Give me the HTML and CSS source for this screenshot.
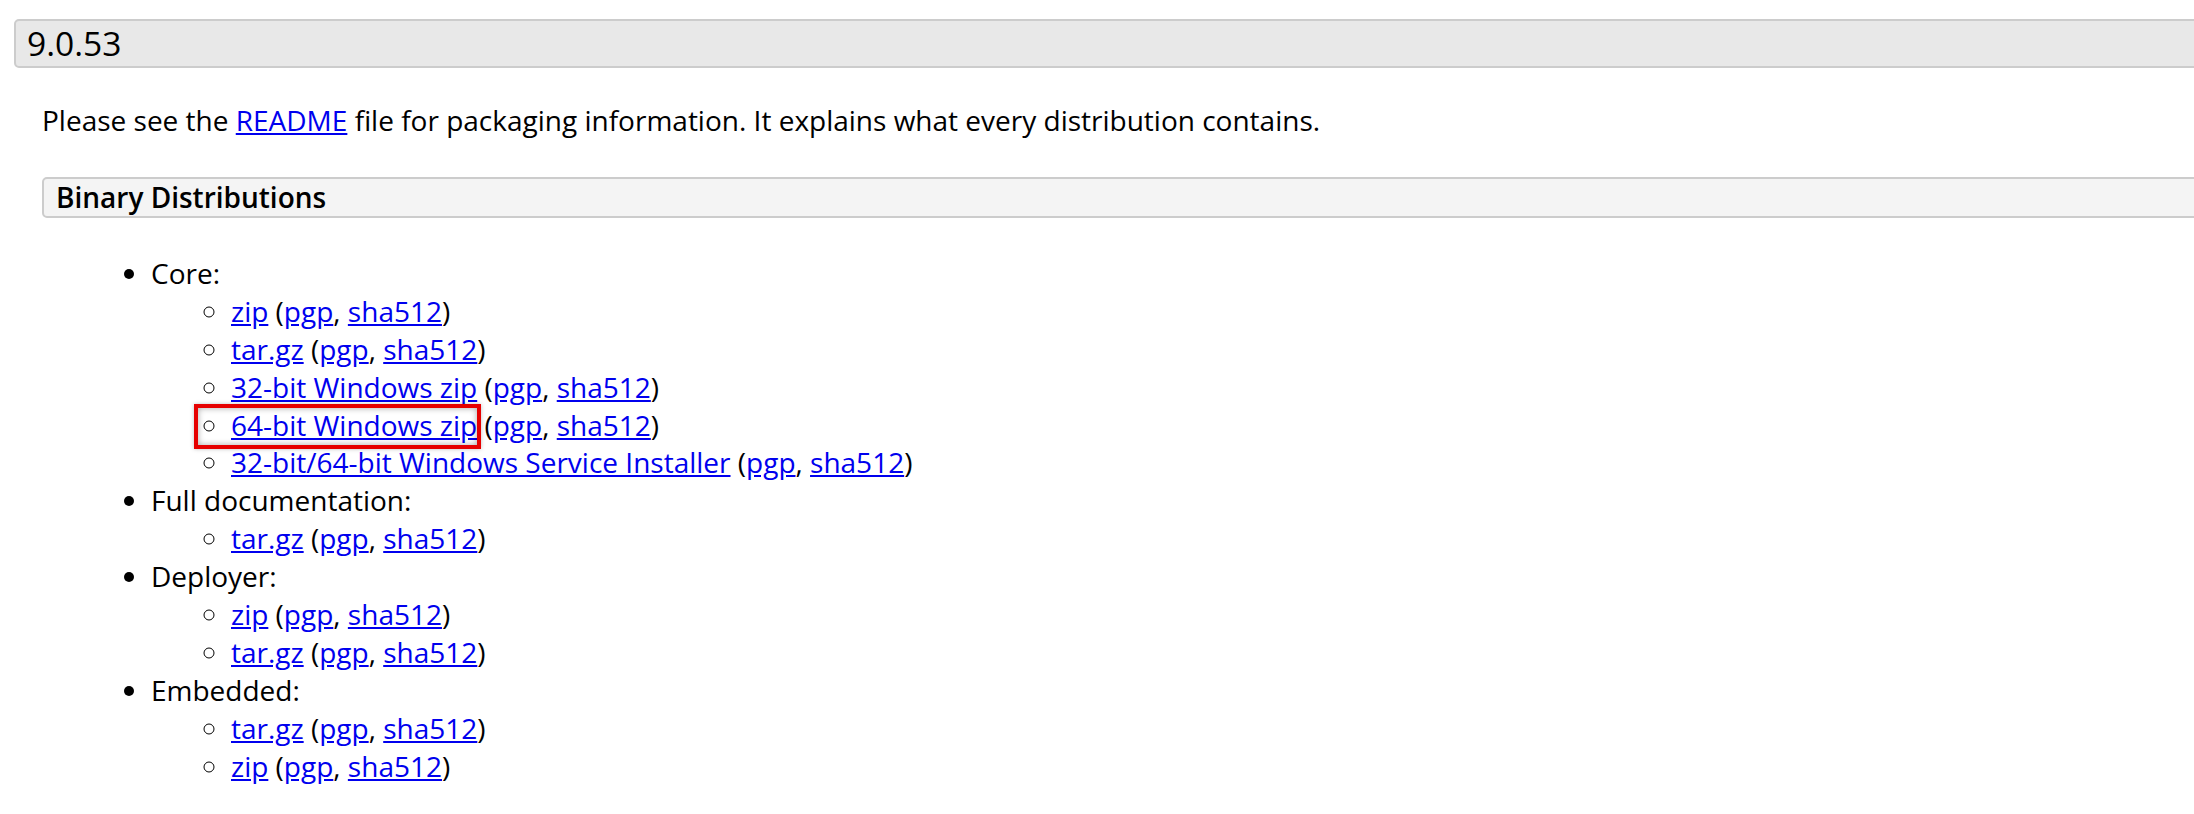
FILE: index.html
```html
<!DOCTYPE html>
<html lang="en">
<head>
<meta charset="utf-8">
<title>Tomcat 9.0.53</title>
<link rel="stylesheet" href="styles.css">
</head>
<body>
<div class="page">
  <h3 class="version-heading">9.0.53</h3>
  <div class="section">
    <p class="intro">Please see the <a href="#">README</a> file for packaging information. It explains what every distribution contains.</p>
    <h4 class="sub-heading">Binary Distributions</h4>
    <ul class="dist-list">
      <li>Core:
        <ul class="file-list">
          <li><a href="#">zip</a> (<a href="#">pgp</a>, <a href="#">sha512</a>)</li>
          <li><a href="#">tar.gz</a> (<a href="#">pgp</a>, <a href="#">sha512</a>)</li>
          <li><a href="#">32-bit Windows zip</a> (<a href="#">pgp</a>, <a href="#">sha512</a>)</li>
          <li class="marked"><span class="highlight"></span><a href="#">64-bit Windows zip</a> (<a href="#">pgp</a>, <a href="#">sha512</a>)</li>
          <li><a href="#">32-bit/64-bit Windows Service Installer</a> (<a href="#">pgp</a>, <a href="#">sha512</a>)</li>
        </ul>
      </li>
      <li>Full documentation:
        <ul class="file-list">
          <li><a href="#">tar.gz</a> (<a href="#">pgp</a>, <a href="#">sha512</a>)</li>
        </ul>
      </li>
      <li>Deployer:
        <ul class="file-list">
          <li><a href="#">zip</a> (<a href="#">pgp</a>, <a href="#">sha512</a>)</li>
          <li><a href="#">tar.gz</a> (<a href="#">pgp</a>, <a href="#">sha512</a>)</li>
        </ul>
      </li>
      <li>Embedded:
        <ul class="file-list">
          <li><a href="#">tar.gz</a> (<a href="#">pgp</a>, <a href="#">sha512</a>)</li>
          <li><a href="#">zip</a> (<a href="#">pgp</a>, <a href="#">sha512</a>)</li>
        </ul>
      </li>
    </ul>
  </div>
</div>
</body>
</html>
```
FILE: styles.css
```css
html, body {
  margin: 0;
  padding: 0;
  background: #fff;
  overflow: hidden;
}

body {
  font-family: "Open Sans", "Liberation Sans", sans-serif;
  font-size: 28px;
  line-height: 37.9px;
  color: #000;
}

.page {
  padding: 19px 0 0 14px;
  width: 2300px;
}

a {
  color: #0000ee;
  text-decoration: underline;
}

.version-heading {
  margin: 0;
  padding: 0 11px;
  font-size: 33.6px;
  line-height: 45px;
  font-weight: 400;
  background: #e8e8e8;
  border: 2px solid #cccccc;
  border-radius: 5px;
}

.section {
  padding-left: 28px;
}

.intro {
  margin: 34px 0 0;
}

.sub-heading {
  margin: 37px 0 0;
  padding: 0 12px;
  font-size: 28px;
  line-height: 37px;
  font-weight: 600;
  background: #f4f4f4;
  border: 2px solid #cccccc;
  border-radius: 5px;
}

.dist-list {
  margin: 37px 0 0;
  padding: 0 0 0 109px;
  list-style: disc;
}

.file-list {
  margin: 0;
  padding: 0 0 0 80px;
  list-style: circle;
}

.marked {
  position: relative;
}

.highlight {
  position: absolute;
  left: -37px;
  top: -3px;
  width: 287px;
  height: 45px;
  box-sizing: border-box;
  border: 4px solid #e60000;
  box-shadow: inset 0 0 6px rgba(0, 0, 0, 0.35), 0 0 4px rgba(0, 0, 0, 0.25);
  pointer-events: none;
}
```
